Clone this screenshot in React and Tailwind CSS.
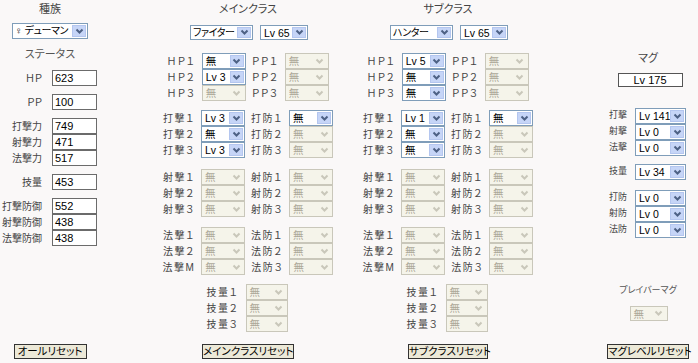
import React from 'react'

const Chevron = ({ disabled }) => (
    <svg width="9" height="7" viewBox="0 0 9 7">
        <path d="M1.5 1.5 L4.5 4.5 L7.5 1.5" fill="none" stroke={disabled ? '#c9c7ba' : '#4d6185'} strokeWidth="2" />
    </svg>
)

// XP style dropdown
const Sel = ({ value, className = 'w-[44px] h-[16px]', textClass = 'text-[10.5px] pl-[3px]', disabled }) => (
    <div className={`${className} flex shrink-0 border ${disabled ? 'border-[#c9c7ba] bg-[#f5f4ea] text-[#aca899]' : 'border-[#7f9db9] bg-white text-black'}`}>
        <span className={`${textClass} flex-1 leading-[14px] whitespace-nowrap overflow-hidden`}>{value}</span>
        <span className={`w-[14px] my-px mr-px flex items-center justify-center ${disabled ? 'bg-[#f5f4ea]' : 'bg-[#c6d5f7] border border-[#b4c6ef]'}`}>
            <Chevron disabled={disabled} />
        </span>
    </div>
)

const StatRow = ({ label, value, className = '' }) => (
    <div className={`flex items-center h-[16px] ${className}`}>
        <span className="w-[42px] text-right text-[10px] text-[#444] whitespace-nowrap">{label}</span>
        <div className="ml-[10px] w-[45px] h-[16px] border border-[#6b6b6b] bg-white text-[11px] leading-[14px] pl-[2px]">{value}</div>
    </div>
)

const PairRow = ({ a, av, b, bv }) => (
    <div className="flex items-center justify-center h-[16px] gap-[6px]">
        <span className="text-[10px] text-[#444] whitespace-nowrap tracking-[1.5px]">{a}</span>
        <Sel value={av ?? '無'} disabled={!av} />
        <span className="text-[10px] text-[#444] whitespace-nowrap tracking-[1.5px]">{b}</span>
        <Sel value={bv ?? '無'} disabled={!bv} />
    </div>
)

const SkillRow = ({ label }) => (
    <div className="flex items-center justify-center h-[16px] gap-[7px] pr-[2px]">
        <span className="text-[10px] text-[#444] whitespace-nowrap tracking-[1.5px]">{label}</span>
        <Sel value="無" className="w-[42px] h-[16px]" disabled />
    </div>
)

const ClassColumn = ({ title, cls, lv, hp, atk }) => (
    <div className="w-[200px] flex flex-col">
        <div className="mt-[3px] h-[13px] text-center text-[11px] leading-[13px] text-[#444]">{title}</div>
        <div className="mt-[9px] flex justify-center gap-[7px] pl-[2px]">
            <Sel value={cls} className="w-[63px] h-[15px]" textClass="text-[10px] pl-[2px] tracking-[-0.4px]" />
            <Sel value={lv} className="w-[48px] h-[15px]" />
        </div>
        <div className="mt-[13px]">
            <PairRow a="ＨＰ１" av={hp[0]} b="ＰＰ１" />
            <PairRow a="ＨＰ２" av={hp[1]} b="ＰＰ２" />
            <PairRow a="ＨＰ３" av={hp[2]} b="ＰＰ３" />
        </div>
        <div className="mt-[9px]">
            <PairRow a="打撃１" av={atk[0]} b="打防１" bv="無" />
            <PairRow a="打撃２" av={atk[1]} b="打防２" />
            <PairRow a="打撃３" av={atk[2]} b="打防３" />
        </div>
        <div className="mt-[11px]">
            <PairRow a="射撃１" b="射防１" />
            <PairRow a="射撃２" b="射防２" />
            <PairRow a="射撃３" b="射防３" />
        </div>
        <div className="mt-[10px]">
            <PairRow a="法撃１" b="法防１" />
            <PairRow a="法撃２" b="法防２" />
            <PairRow a="法撃M" b="法防３" />
        </div>
        <div className="mt-[9px]">
            <SkillRow label="技量１" />
            <SkillRow label="技量２" />
            <SkillRow label="技量３" />
        </div>
    </div>
)

const MagRow = ({ label, value, className = '' }) => (
    <div className={`flex items-center h-[16px] ${className}`}>
        <span className="w-[29px] text-right text-[9px] text-[#444]">{label}</span>
        <Sel value={value} className="ml-[8px] w-[51px] h-[16px]" />
    </div>
)

const Btn = ({ children, className }) => (
    <button className={`${className} h-[15px] border border-[#333] bg-[#ece9d8] text-[10.5px] leading-[13px] text-black whitespace-nowrap`}>
        {children}
    </button>
)

export default function App() {
    return (
        <div className="w-[698px] h-[363px] bg-[#faf8f8] font-['Liberation_Sans','Noto_Sans_CJK_JP',sans-serif] [font-feature-settings:'palt'] overflow-hidden">
            <div className="flex h-[344px]">
                {/* status */}
                <div className="w-[100px] flex flex-col">
                    <div className="mt-[3px] h-[13px] text-center text-[11px] leading-[13px] text-[#444]">種族</div>
                    <div className="mt-[7px] flex justify-center">
                        <Sel value="♀ デューマン" className="w-[76px] h-[16px]" textClass="text-[10px] pl-[2px] tracking-[-0.4px]" />
                    </div>
                    <div className="mt-[9px] h-[13px] text-center text-[11px] leading-[13px] text-[#555]">ステータス</div>
                    <StatRow label="ＨＰ" value="623" className="mt-[9px]" />
                    <StatRow label="ＰＰ" value="100" className="mt-[8px]" />
                    <StatRow label="打撃力" value="749" className="mt-[8px]" />
                    <StatRow label="射撃力" value="471" />
                    <StatRow label="法撃力" value="517" />
                    <StatRow label="技量" value="453" className="mt-[8px]" />
                    <StatRow label="打撃防御" value="552" className="mt-[8px]" />
                    <StatRow label="射撃防御" value="438" />
                    <StatRow label="法撃防御" value="438" />
                </div>

                <div className="ml-[48px]">
                    <ClassColumn title="メインクラス" cls="ファイター" lv="Lv 65" hp={[ '無', 'Lv 3', null ]} atk={[ 'Lv 3', '無', 'Lv 3' ]} />
                </div>
                <ClassColumn title="サブクラス" cls="ハンター" lv="Lv 65" hp={[ 'Lv 5', '無', '無' ]} atk={[ 'Lv 1', '無', '無' ]} />

                {/* mag */}
                <div className="ml-[50px] w-[100px] flex flex-col">
                    <div className="mt-[52px] h-[13px] text-center text-[11px] leading-[13px] text-[#444]">マグ</div>
                    <div className="mt-[8px] mx-auto translate-x-[2px] w-[65px] h-[14px] border border-[#555] bg-white text-center text-[11px] leading-[12px]">Lv 175</div>
                    <div className="mt-[21px]">
                        <MagRow label="打撃" value="Lv 141" />
                        <MagRow label="射撃" value="Lv 0" />
                        <MagRow label="法撃" value="Lv 0" />
                        <MagRow label="技量" value="Lv 34" className="mt-[8px]" />
                        <MagRow label="打防" value="Lv 0" className="mt-[10px]" />
                        <MagRow label="射防" value="Lv 0" />
                        <MagRow label="法防" value="Lv 0" />
                    </div>
                    <div className="mt-[46px] h-[13px] text-center text-[9px] leading-[13px] text-[#555]">プレイバーマグ</div>
                    <div className="mt-[9px] flex justify-center pl-[1px]">
                        <Sel value="無" className="w-[38px] h-[15px]" disabled />
                    </div>
                </div>
            </div>

            <div className="flex">
                <div className="w-[100px] flex justify-center">
                    <Btn className="w-[73px]">オールリセット</Btn>
                </div>
                <div className="ml-[48px] w-[200px] flex justify-center">
                    <Btn className="w-[92px]">メインクラスリセット</Btn>
                </div>
                <div className="w-[200px] flex justify-center">
                    <Btn className="w-[80px]">サブクラスリセット</Btn>
                </div>
                <div className="ml-[50px] w-[100px] flex justify-center">
                    <Btn className="w-[82px]">マグレベルリセット</Btn>
                </div>
            </div>
        </div>
    )
}
